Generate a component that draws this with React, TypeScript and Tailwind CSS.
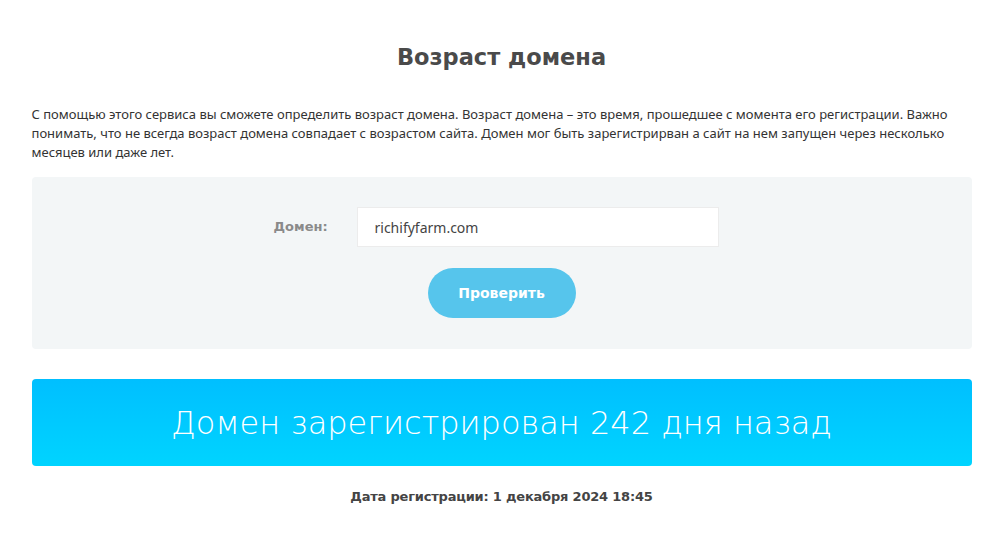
import React from "react";

export default function App() {
  return (
    <div className="min-h-[533px] bg-white font-['Noto_Sans',sans-serif] text-[#444]">
      <div className="mx-auto w-[940px] pt-[40px]">
        <h1 className="text-center font-['DejaVu_Sans',sans-serif] text-[22.5px] font-bold leading-[34px] text-[#4a4a4a]">
          Возраст домена
        </h1>

        <p className="mt-[31px] text-[13px] leading-[19px] text-[#333]">
          С помощью этого сервиса вы сможете определить возраст домена. Возраст домена – это время,
          прошедшее с момента его регистрации. Важно понимать, что не всегда возраст домена совпадает с
          возрастом сайта. Домен мог быть зарегистрирван а сайт на нем запущен через несколько месяцев
          или даже лет.
        </p>

        <div className="mt-[15px] h-[172px] rounded-[4px] bg-[#f3f6f7] pt-[30px]">
          <div className="flex items-center justify-center">
            <label className="ml-[-11px] w-[83px] font-['DejaVu_Sans',sans-serif] text-[13px] font-bold text-[#8a8a8a]">
              Домен:
            </label>
            <input
              className="h-[40px] w-[362px] border border-[#ececec] bg-white px-[17px] font-['Noto_Sans',sans-serif] text-[14px] text-[#444] outline-none"
              defaultValue="richifyfarm.com"
            />
          </div>
          <div className="mt-[21px] flex justify-center">
            <button className="h-[50px] w-[148px] rounded-full bg-[#56c5ec] font-['DejaVu_Sans',sans-serif] text-[14px] font-bold text-white">
              Проверить
            </button>
          </div>
        </div>

        <div className="mt-[30px] flex h-[87px] items-center justify-center rounded-[4px] bg-gradient-to-b from-[#00bfff] to-[#00d4ff] font-['DejaVu_Sans',sans-serif] text-[32px] font-light text-white">
          Домен зарегистрирован 242 дня назад
        </div>

        <div className="mt-[21px] text-center font-['DejaVu_Sans',sans-serif] text-[13px] font-bold tracking-[-0.2px] text-[#444]">
          Дата регистрации: 1 декабря 2024 18:45
        </div>
      </div>
    </div>
  );
}
